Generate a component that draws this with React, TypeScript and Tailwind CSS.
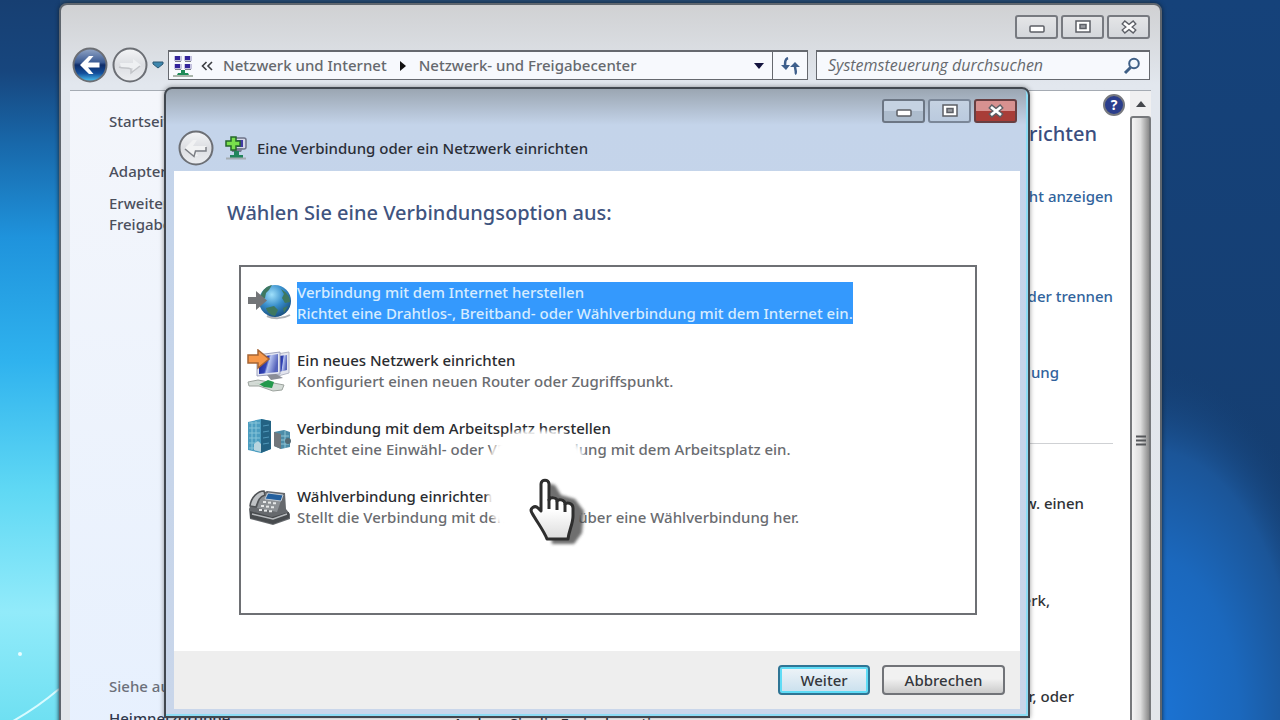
import { clsx } from "clsx";
import type { ReactNode } from "react";

function Wallpaper() {
  return (
    <svg
      className="absolute inset-0 h-full w-full"
      viewBox="0 0 1280 720"
      preserveAspectRatio="none"
      aria-hidden="true"
    >
      <defs>
        <linearGradient id="sky" x1="0" y1="0" x2="0" y2="1">
          <stop offset="0" stopColor="#173f72" />
          <stop offset="0.1" stopColor="#17467e" />
          <stop offset="0.2" stopColor="#1868aa" />
          <stop offset="0.33" stopColor="#1f93dc" />
          <stop offset="0.5" stopColor="#2fb2ee" />
          <stop offset="0.68" stopColor="#5fd8f4" />
          <stop offset="0.85" stopColor="#92ebfa" />
          <stop offset="1" stopColor="#6fe0f2" />
        </linearGradient>
        <linearGradient id="night" x1="0" y1="0" x2="0" y2="1">
          <stop offset="0" stopColor="#15427a" />
          <stop offset="1" stopColor="#153c6d" />
        </linearGradient>
        <radialGradient id="glow" gradientUnits="userSpaceOnUse" cx="1150" cy="720" r="360" gradientTransform="translate(1150 720) scale(0.55 1) translate(-1150 -720)">
          <stop offset="0" stopColor="#1b74d6" />
          <stop offset="0.45" stopColor="#1b68bd" />
          <stop offset="0.75" stopColor="#1b5598" />
          <stop offset="1" stopColor="#153f72" stopOpacity="0" />
        </radialGradient>
      </defs>
      <rect width="640" height="720" fill="url(#sky)" />
      <rect x="60" width="1220" height="90" fill="#264b74" />
      <rect x="1150" width="130" height="720" fill="url(#night)" />
      <rect x="1100" y="340" width="180" height="380" fill="url(#glow)" />
      <path d="M0 728 Q32 712 59 689" stroke="#d8fbff" strokeWidth="2" fill="none" />
      <circle cx="20" cy="654" r="2" fill="#e8fdff" />
    </svg>
  );
}

type CaptionKind = "minimize" | "maximize" | "close";

function CaptionGlyph({ kind }: { kind: CaptionKind }) {
  return (
    <svg width="20" height="16" viewBox="0 0 20 16" aria-hidden="true">
      {kind === "minimize" && (
        <rect x="3" y="7" width="14" height="6" rx="1" fill="#fff" stroke="#5c5f66" strokeWidth="1.5" />
      )}
      {kind === "maximize" && (
        <>
          <rect x="3" y="2" width="14" height="11" fill="#fff" stroke="#5c5f66" strokeWidth="1.5" />
          <rect x="7" y="5.5" width="6" height="4" fill="#9a9da3" stroke="#5c5f66" strokeWidth="1.5" />
        </>
      )}
      {kind === "close" && (
        <>
          <path d="M4 3l12 10M16 3L4 13" stroke="#5c5f66" strokeWidth="5.500" />
          <path d="M5 4l10 8M15 4L5 12" stroke="#fff" strokeWidth="2.800" />
        </>
      )}
    </svg>
  );
}

function CaptionButton({ kind, label, className }: { kind: CaptionKind; label: string; className: string }) {
  return (
    <button
      type="button"
      aria-label={label}
      className={clsx("flex h-6 w-[43px] items-center justify-center rounded-[3px] border-2", className)}
    >
      <CaptionGlyph kind={kind} />
    </button>
  );
}

function NavOrb({ label, active }: { label: string; active?: boolean }) {
  return (
    <button type="button" aria-label={label} className="shrink-0">
      <svg width="36" height="36" viewBox="0 0 36 36" aria-hidden="true">
        <defs>
          <linearGradient id="orbBlue" x1="0" y1="0" x2="0" y2="1">
            <stop offset="0" stopColor="#93a6c6" />
            <stop offset="0.42" stopColor="#3b5b94" />
            <stop offset="0.5" stopColor="#0f2d69" />
            <stop offset="0.75" stopColor="#134f9c" />
            <stop offset="1" stopColor="#4fc8f5" />
          </linearGradient>
          <linearGradient id="orbGrey" x1="0" y1="0" x2="0" y2="1">
            <stop offset="0" stopColor="#f4f5f7" />
            <stop offset="0.5" stopColor="#dcdee2" />
            <stop offset="1" stopColor="#eceef1" />
          </linearGradient>
        </defs>
        <circle cx="18" cy="18" r="16.500" fill={active ? "url(#orbBlue)" : "url(#orbGrey)"} stroke="#6c6f75" strokeWidth="2" />
        {active ? (
          <path d="M8 18l9-9h4.500l-5.500 6.500h11.500v5H16l5.500 6.500H17z" fill="#fff" />
        ) : label === "Vorwärts" ? (
          <>
            <path d="M8 16h13v-4l8 6-8 8v-5H9z" fill="#eef0f2" />
            <path d="M7 20c4 2 9 0 12 2v4l9-7" fill="none" stroke="#c2c4c8" strokeWidth="1.500" />
          </>
        ) : (
          <>
            <path d="M7 18l8-8h4l-4 6h13v4H17l3 6h-4z" fill="#f1f2f3" />
            <path d="M7 19l9 7.500 1.500-5.500H28v-4" fill="none" stroke="#7d8086" strokeWidth="1.500" />
          </>
        )}
      </svg>
    </button>
  );
}

function NetworkCenterIcon() {
  return (
    <svg className="shrink-0" width="20" height="22" viewBox="0 0 20 22" aria-hidden="true">
      {[0, 10].map((x) =>
        [0, 8].map((y) => (
          <g key={`${x}-${y}`}>
            <rect x={x + 1} y={y + 1} width="8" height="5" fill="#c5c3df" />
            <rect x={x + 2} y={y + 1} width="5" height="4" fill="#33239b" />
            <rect x={x + 2} y={y + 6} width="6" height="1" fill="#7d7f8c" />
          </g>
        )),
      )}
      <path d="M8 15h4v3h3l1 2H4l1-2h3z" fill="#1e8a57" />
      <rect y="20" width="20" height="2" fill="#a9b5ab" />
    </svg>
  );
}

function AddNetworkIcon() {
  return (
    <svg width="24" height="24" viewBox="0 0 24 24" aria-hidden="true">
      <rect x="9" y="2" width="13" height="11" rx="2" fill="#d5d8e8" stroke="#6e7388" strokeWidth="1.500" />
      <rect x="13" y="4" width="6" height="7" fill="#423aa5" />
      <path d="M7 12h12l-2 4H8z" fill="#777d93" />
      <path d="M10 15h5v4h4v3H6v-3h4z" fill="#23855c" />
      <path d="M2 22.500h20" stroke="#a4adb3" strokeWidth="2" />
      <path d="M7 1h5v4h4v5h-4v4H7v-4H2V5h5z" fill="#79e04c" stroke="#24662b" strokeWidth="1.500" />
    </svg>
  );
}

function GlobeIcon() {
  return (
    <svg width="44" height="44" viewBox="0 0 44 44" aria-hidden="true">
      <defs>
        <radialGradient id="sea" cx="0.4" cy="0.3" r="0.75">
          <stop offset="0" stopColor="#9fe0fb" />
          <stop offset="0.5" stopColor="#388ecb" />
          <stop offset="1" stopColor="#174c7c" />
        </radialGradient>
      </defs>
      <path d="M20 35c6 3 16 3 23-1" stroke="#aeb2b6" strokeWidth="2" fill="none" />
      <circle cx="28" cy="20" r="16" fill="url(#sea)" />
      <path d="M14 14c2-6 6-9 11-10l-3 5-3 3-1 5-5 2zM19 27l8-2 4 4-3 6c-5-1-8-4-9-8zM34 8c5 3 9 7 9 13l-5 1-3-5 2-4zM36 27l5-2-4 7z" fill="#3e7860" />
      <path d="M1 16h8v-6l11 9.500L9 29v-6H1z" fill="#737578" />
    </svg>
  );
}

function NewNetworkIcon() {
  return (
    <svg width="44" height="44" viewBox="0 0 44 44" aria-hidden="true">
      <defs>
        <linearGradient id="screen" x1="0" y1="0" x2="1" y2="0.300">
          <stop offset="0" stopColor="#17208a" />
          <stop offset="0.5" stopColor="#3446b8" />
          <stop offset="0.6" stopColor="#b7c4f0" />
          <stop offset="1" stopColor="#5563bb" />
        </linearGradient>
      </defs>
      <path d="M30 5l12-2v21l-11 3z" fill="#e3e5ee" stroke="#b4b7c6" />
      <path d="M32 7l8-1v15l-8 2z" fill="url(#screen)" />
      <path d="M10 6l23-3v22l-23 2z" fill="#e4e7f2" stroke="#9da2bd" />
      <path d="M12 8l19-3v18l-19 2z" fill="url(#screen)" />
      <path d="M20 26l9-1 7 4-12 2z" fill="#8b8e98" />
      <path d="M1 33l10-2 26 5-2 5-9 1-14-5H2z" fill="#d4dbd6" stroke="#9ca39e" />
      <path d="M2 34l11 1 8-4 6 2-2 6-8-1-5-3z" fill="#24994c" />
      <path d="M1 6h10V1l11 9-11 9v-5H1z" fill="#f6984a" stroke="#a56434" strokeWidth="1.500" />
    </svg>
  );
}

function WorkplaceIcon() {
  return (
    <svg width="44" height="44" viewBox="0 0 44 44" aria-hidden="true">
      <path d="M27 15l10-2 6 2v15l-9 2-7-3z" fill="#4c8ca8" />
      <path d="M27 15l7 2v15l-7-3z" fill="#71777c" />
      <path d="M34 19h8M34 23h8M34 27h8M38 14v17" stroke="#8fc3d3" />
      <path d="M1 5l13-3 10 2v28l-10 4-13-3z" fill="#4c9dc0" />
      <path d="M14 2l10 2v28l-10 4z" fill="#236283" />
      <path d="M2 6h11M2 11h11M2 16h11M2 21h11M2 26h11M2 31h11M5 5v28M9 4v30" stroke="#86c4d8" />
      <path d="M16 9l6-1M16 15l6-1M16 21l6-1M16 27l6-1" stroke="#5098ba" />
      <path d="M7 27l4-3 3 3v8l-7-2z" fill="#b9d5df" />
      <circle cx="41" cy="24" r="3" fill="#536a74" />
    </svg>
  );
}

function PhoneIcon() {
  return (
    <svg width="44" height="44" viewBox="0 0 44 44" aria-hidden="true">
      <path d="M2 24l5-12 13-6 18 2 1 16 4 5v5l-17 6L3 34z" fill="#66696d" />
      <path d="M3 26l22 6 17-5v6l-16 6L3 33z" fill="#484b4e" />
      <path d="M5 29l21 5 14-5" stroke="#b7babd" strokeWidth="1.500" fill="none" />
      <path d="M15 8l21 2-6 17-20-4z" fill="#8c9094" />
      <path d="M21 8l15 2-2 6-16-2z" fill="#23609e" stroke="#c5ccd4" />
      <path d="M3 21c1-9 8-15 14-15l1 4c-6 2-7 6-9 12z" fill="#bfc2c5" stroke="#4f5255" strokeWidth="1.500" />
      {[0, 5, 10].map((x) =>
        [0, 4, 8].map((y) => (
          <rect key={`${x}-${y}`} x={16 + x - y / 2} y={16 + y + x / 8} width="3" height="2" fill="#e5e7e8" />
        )),
      )}
    </svg>
  );
}

function HandCursor() {
  return (
    <svg
      className="pointer-events-none absolute top-[386px] left-[361px]"
      width="62"
      height="74"
      viewBox="0 0 62 74"
      aria-hidden="true"
    >
      <defs>
        <filter id="handShadow" x="-0.3" y="-0.3" width="1.6" height="1.6">
          <feGaussianBlur stdDeviation="1.500" />
        </filter>
        <linearGradient id="skin" x1="0" y1="0" x2="0" y2="1">
          <stop offset="0.5" stopColor="#fff" />
          <stop offset="1" stopColor="#dcdcdc" />
        </linearGradient>
      </defs>
      <path d="M20 8l8 2 6 10 14 4 9 12-2 22-8 11H25z" fill="#3f3f3f" opacity="0.75" filter="url(#handShadow)" />
      <path
        d="M14 9c0-5 8-5 8 0v16c1-3 8-3 8 1 1-2 8-2 8 3 2-2 8-1 8 4v8c0 8-4 14-5 23H20C17 56 10 47 5 38c-3-5 3-8 6-5l3 3z"
        fill="url(#skin)"
        stroke="#2e2e2e"
        strokeWidth="3"
        strokeLinejoin="round"
      />
      <path d="M22 24v10M30 26v9M38 29v8" stroke="#2e2e2e" strokeWidth="3" />
    </svg>
  );
}

function AddressBar() {
  return (
    <div className="flex items-center pr-[10px] pl-[11px]">
      <NavOrb label="Zurück" active />
      <div className="ml-1 flex">
        <NavOrb label="Vorwärts" />
      </div>
      <button type="button" aria-label="Letzte Seiten" className="px-1">
        <svg width="12" height="8" viewBox="0 0 12 8" aria-hidden="true">
          <path d="M1 1h10v2L6 7 1 3z" fill="#3d86ad" stroke="#2d5974" />
        </svg>
      </button>
      <nav
        aria-label="Adresse"
        className="flex h-[30px] min-w-0 flex-1 items-center border border-t-2 border-[#66696f] bg-[#f7f9fd] pl-1 text-[#66696e]"
      >
        <NetworkCenterIcon />
        <svg className="mx-2" width="12" height="10" viewBox="0 0 12 10" aria-hidden="true">
          <path d="M5.500 1l-4 4 4 4M11 1L7 5l4 4" fill="none" stroke="#3c3e42" strokeWidth="1.600" />
        </svg>
        <a href="#internet" className="ml-[2px] whitespace-nowrap">Netzwerk und Internet</a>
        <svg className="mx-3" width="8" height="10" viewBox="0 0 8 10" aria-hidden="true">
          <path d="M1 0l6 5-6 5z" fill="#111" />
        </svg>
        <a href="#freigabecenter" className="whitespace-nowrap">Netzwerk- und Freigabecenter</a>
        <button type="button" aria-label="Vorherige Orte" className="ml-auto px-2">
          <svg width="10" height="6" viewBox="0 0 10 6" aria-hidden="true">
            <path d="M0 0h10L5 6z" fill="#14143f" />
          </svg>
        </button>
      </nav>
      <button
        type="button"
        aria-label="Aktualisieren"
        className="flex h-[30px] w-[35px] items-center justify-center border border-t-2 border-l-0 border-[#66696f] bg-[#f7f9fd]"
      >
        <svg width="20" height="18" viewBox="0 0 20 18" aria-hidden="true">
          <path d="M8 1c-3 1-3 4-3 9M15 17c2-1 0-4 0-8" stroke="#3e5f8c" strokeWidth="2.500" fill="none" />
          <path d="M1 8h9l-4 5zM10 10h10l-5-5z" fill="#3e5f8c" />
        </svg>
      </button>
      <label className="ml-2 flex h-[30px] w-[334px] items-center border border-t-2 border-[#66696f] bg-[#f7f9fd] pr-2 pl-[11px]">
        <input
          type="search"
          aria-label="Systemsteuerung durchsuchen"
          placeholder="Systemsteuerung durchsuchen"
          className="min-w-0 flex-1 bg-transparent font-['Open_Sans',sans-serif] text-base leading-[21px] italic outline-none placeholder:text-[#66696e]"
        />
        <svg width="18" height="18" viewBox="0 0 18 18" aria-hidden="true">
          <circle cx="11" cy="6.500" r="4.800" fill="#f2f7fc" stroke="#3e5f86" strokeWidth="2" />
          <path d="M7.500 10.500L2 16" stroke="#3e5f86" strokeWidth="3" />
        </svg>
      </label>
    </div>
  );
}

function ControlPanelWindow() {
  return (
    <section
      aria-label="Netzwerk- und Freigabecenter"
      className="absolute top-[3px] right-[118px] -bottom-12 left-[59px] flex flex-col rounded-t-lg border-2 border-[#5f666e] bg-linear-to-b from-[#d0d1d3] via-[#e2e7ee] via-[80px] to-[#e3e6ea] shadow-[0_0_4px_#123]"
    >
      <div className="flex justify-end gap-[3px] pt-[10px] pr-[10px] pb-2">
        <CaptionButton kind="minimize" label="Minimieren" className="border-[#777a80] bg-linear-to-b from-[#e4e5e7] to-[#d4d7db]" />
        <CaptionButton kind="maximize" label="Maximieren" className="border-[#777a80] bg-linear-to-b from-[#e4e5e7] to-[#d4d7db]" />
        <CaptionButton kind="close" label="Schließen" className="border-[#777a80] bg-linear-to-b from-[#e4e5e7] to-[#d4d7db]" />
      </div>
      <AddressBar />
      <div className="mx-[9px] mt-[7px] flex min-h-0 flex-1 border-t border-[#a5abb3] bg-white">
        <aside className="flex w-[220px] shrink-0 flex-col bg-linear-to-b from-[#f4f6fb] to-[#e6f0fe] pl-[39px] text-[#4b4f5c]">
          <a href="#start" className="mt-5">Startseite</a>
          <a href="#adapter" className="mt-[29px]">Adapter</a>
          <a href="#erweitert" className="mt-[11px]">
            Erweitert
            <br />
            Freigabe
          </a>
          <span className="mt-auto text-[#6c707a]">Siehe auch</span>
          <a href="#heimnetz" className="mt-[11px] mb-[37px] text-[#30384c]">Heimnetzgruppe</a>
        </aside>
        <main className="flex min-w-0 flex-1 flex-col items-end overflow-hidden pr-[17px] text-[#303236]">
          <button
            type="button"
            aria-label="Hilfe"
            className="mt-[3px] -mr-3 flex size-[22px] items-center justify-center rounded-full border-2 border-[#77797f] bg-[#2b3e8c] text-sm font-bold text-white"
          >
            ?
          </button>
          <h2 className="mt-1 mr-4 text-xl leading-7 text-[#3b4e80]">einrichten</h2>
          <a href="#uebersicht" className="mt-[38px] text-[#31639c]">Übersicht anzeigen</a>
          <a href="#trennen" className="mt-[79px] text-[#31639c]">oder trennen</a>
          <a href="#lan" className="mt-[55px] mr-[54px] text-[#31639c]">Verbindung</a>
          <hr className="mt-[60px] w-full border-[#cfd1d4]" />
          <p className="mt-[49px] mr-[29px]">bzw. einen</p>
          <p className="mt-[76px] mr-[63px]">Netzwerk,</p>
          <p className="mt-[75px] mr-[39px]">her, oder</p>
          <p className="mt-[6px] ml-[163px] self-start">Ändern Sie die Freigabeoptionen</p>
        </main>
        <div aria-hidden="true" className="flex w-[21px] shrink-0 flex-col bg-[#f0f0f1]">
          <div className="flex h-[25px] items-center justify-center">
            <svg width="10" height="6" viewBox="0 0 10 6">
              <path d="M0 6h10L5 0z" fill="#45484d" />
            </svg>
          </div>
          <div className="flex flex-1 items-center justify-center rounded-t-[3px] border-2 border-[#77797c] bg-linear-to-r from-[#f4f4f4] via-[#dedede] to-[#8b8b8b]">
            <svg width="10" height="12" viewBox="0 0 10 12">
              <path d="M0 1.500h10M0 5.500h10M0 9.500h10" stroke="#55575a" strokeWidth="2" />
            </svg>
          </div>
        </div>
      </div>
    </section>
  );
}

type Option = { title: string; text: string; icon: ReactNode };

const options: Option[] = [
  {
    title: "Verbindung mit dem Internet herstellen",
    text: "Richtet eine Drahtlos-, Breitband- oder Wählverbindung mit dem Internet ein.",
    icon: <GlobeIcon />,
  },
  {
    title: "Ein neues Netzwerk einrichten",
    text: "Konfiguriert einen neuen Router oder Zugriffspunkt.",
    icon: <NewNetworkIcon />,
  },
  {
    title: "Verbindung mit dem Arbeitsplatz herstellen",
    text: "Richtet eine Einwähl- oder VPN-Verbindung mit dem Arbeitsplatz ein.",
    icon: <WorkplaceIcon />,
  },
  {
    title: "Wählverbindung einrichten",
    text: "Stellt die Verbindung mit dem Internet über eine Wählverbindung her.",
    icon: <PhoneIcon />,
  },
];

function ConnectionDialog() {
  return (
    <section
      role="dialog"
      aria-label="Eine Verbindung oder ein Netzwerk einrichten"
      className="absolute top-[87px] right-[250px] bottom-[2px] left-[164px] flex flex-col rounded-t-lg border-2 border-[#41474f] bg-linear-to-b from-[#9ba6b2] via-[#c4d4ea] via-[36px] to-[#c9d6ea] px-2 pb-[7px] shadow-[inset_-2px_-2px_0_#8ddcf4,0_0_5px_#0006]"
    >
      <div className="flex justify-end gap-[3px] pt-[10px] pr-[3px]">
        <CaptionButton kind="minimize" label="Minimieren" className="border-[#6c7684] bg-linear-to-b from-[#c5d2e2] from-50% to-[#adbccd] to-50%" />
        <CaptionButton kind="maximize" label="Maximieren" className="border-[#7b8798] bg-linear-to-b from-[#c5d2e2] to-[#bacade]" />
        <CaptionButton kind="close" label="Schließen" className="border-[#673f42] bg-linear-to-b from-[#d79190] from-50% to-[#a83d38] to-50%" />
      </div>
      <header className="flex h-12 items-center pt-[2px] pl-1">
        <NavOrb label="Zurück" />
        <div className="ml-[10px] flex items-center gap-[9px]">
          <AddNetworkIcon />
          <h1 className="text-[#2a2e37]">Eine Verbindung oder ein Netzwerk einrichten</h1>
        </div>
      </header>
      <div className="flex min-h-0 flex-1 flex-col bg-white pt-7 pr-[43px] pb-9 pl-[65px]">
        <h2 className="-ml-3 text-xl leading-7 text-[#40547f]">Wählen Sie eine Verbindungsoption aus:</h2>
        <div className="relative mt-[38px] flex-1 border-2 border-[#6e7074] pt-[14px] pl-[6px]">
          <ul className="flex flex-col gap-6">
            {options.map((option, i) => (
              <li key={option.title}>
                <button type="button" className="flex h-11 items-center gap-[6px] text-left">
                  {option.icon}
                  <span
                    className={clsx(
                      "flex flex-col whitespace-nowrap",
                      i === 0 ? "bg-[#3499fd] text-[#d6ecff]" : "text-[#6a6c70]",
                    )}
                  >
                    <span className={clsx(i > 0 && "text-[#2a2c30]")}>{option.title}</span>
                    <span>{option.text}</span>
                  </span>
                </button>
              </li>
            ))}
          </ul>
          <div aria-hidden="true" className="absolute top-[164px] left-[247px] h-[104px] w-[98px] rounded-[36%] bg-white blur-[2px]" />
        </div>
      </div>
      <footer className="flex h-[58px] items-center justify-end gap-3 bg-[#eeeeee] pr-[15px]">
        <button
          type="submit"
          className="h-[30px] w-[92px] rounded-[4px] border-2 border-[#2f7595] bg-linear-to-b from-[#eff4f8] to-[#c9e0ee] text-[#34373c] shadow-[inset_0_0_0_2px_#5fdcf6]"
        >
          Weiter
        </button>
        <button
          type="button"
          className="h-[30px] w-[123px] rounded-[4px] border-2 border-[#717378] bg-linear-to-b from-[#f1f1f1] from-45% to-[#cbcbcb] text-[#34373c]"
        >
          Abbrechen
        </button>
      </footer>
      <HandCursor />
    </section>
  );
}

export default function App() {
  return (
    <div className="relative h-screen w-full overflow-hidden bg-[#15427a] font-['Noto_Sans',sans-serif] text-[15px] leading-[21px] font-medium">
      <Wallpaper />
      <ControlPanelWindow />
      <ConnectionDialog />
    </div>
  );
}
